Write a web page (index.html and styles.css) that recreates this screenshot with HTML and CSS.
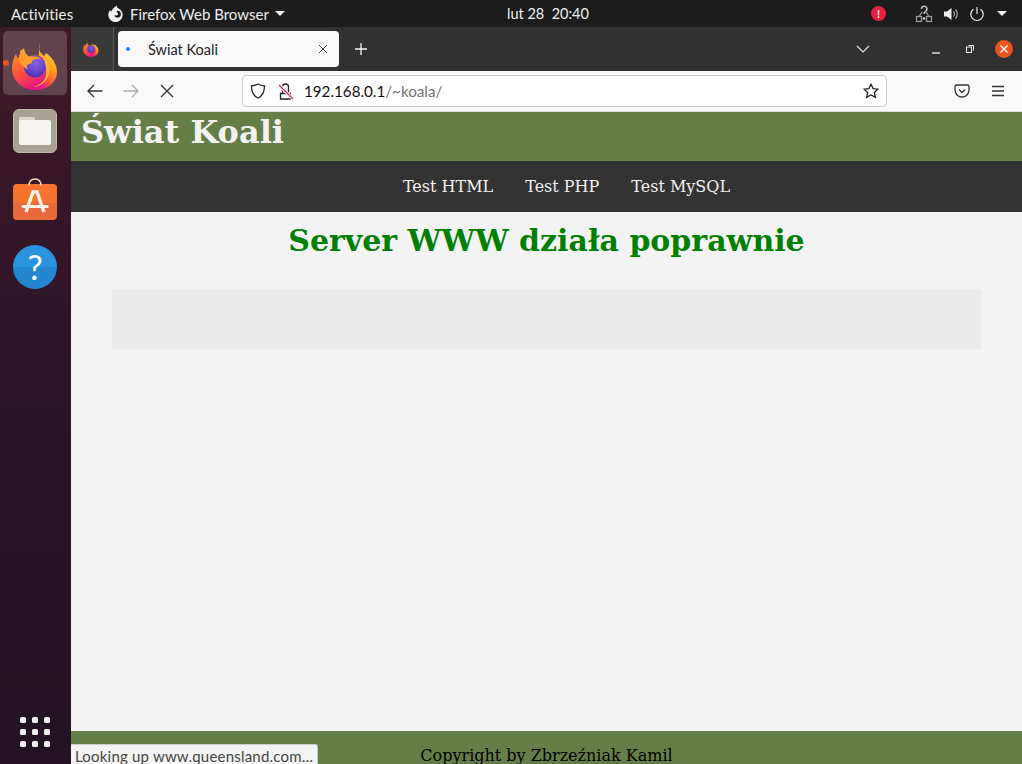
FILE: index.html
```html
<!DOCTYPE html>
<html lang="pl">
<head>
<meta charset="utf-8">
<title>Świat Koali</title>
<link rel="stylesheet" href="styles.css">
</head>
<body>
<div class="desktop">
  <div class="topbar">
    <div class="top-left">
      <span class="activities">Activities</span>
      <span class="app-menu">
        <svg class="app-icon" width="18" height="18" viewBox="0 0 18 18"><path d="M9 .5c-.3 1.300.2 2.200 1.200 2.700a7.200 7.200 0 1 1-7.800 1.500c0 1 .2 1.600.7 2C3.700 4.800 5.800 2.600 9 .5z" fill="#f0f0f0"/><path d="M9.500 5.800a3.400 3.400 0 1 1-3.300 4.300c1.200.7 3.300.6 3.800-.6.300-.9-.3-2-1.500-2.400.3-.7.500-1 1-1.300z" fill="#1c1c1c"/></svg>
        <span>Firefox Web Browser</span>
        <span class="caret"></span>
      </span>
    </div>
    <div class="clock">lut 28&nbsp; 20:40</div>
    <div class="top-right">
      <span class="alert">!</span>
      <svg class="net" width="18" height="18" viewBox="0 0 18 18" fill="none" stroke="#9a9a9a" stroke-width="1.300"><rect x="1.500" y="11.500" width="5" height="5"/><rect x="11.500" y="11.500" width="5" height="5"/><path d="M4 11.500 7 7M14 11.500 11 7"/><path d="M6.500 4a2.700 2.700 0 1 1 4 2.300C9.400 7 9 7.500 9 9" stroke="#bbb" stroke-width="1.600"/><circle cx="9" cy="13.500" r="1.200" fill="#ddd" stroke="none"/></svg>
      <svg class="vol" width="16" height="16" viewBox="0 0 16 16"><path d="M1 5.500h3L8.500 2v12L4 10.500H1z" fill="#eee"/><path d="M10.500 5.500a3.500 3.500 0 0 1 0 5M12.500 3.500a6.500 6.500 0 0 1 0 9" fill="none" stroke="#aaa" stroke-width="1.200"/></svg>
      <svg class="pow" width="16" height="16" viewBox="0 0 16 16" fill="none" stroke="#eee" stroke-width="1.200"><path d="M8 1v7"/><path d="M4.500 3.200a6.200 6.200 0 1 0 7 0"/></svg>
      <span class="caret"></span>
    </div>
  </div>

  <nav class="dock">
    <div class="dock-item dock-active">
      <span class="run-dot"></span>
      <svg class="ff-logo" width="46" height="47" viewBox="0 0 46 47">
        <defs>
          <linearGradient id="ffa" x1="0.750" y1="0" x2="0.400" y2="1"><stop offset="0" stop-color="#ffe54a"/><stop offset="0.450" stop-color="#ffa41f"/><stop offset="0.750" stop-color="#ff5a36"/><stop offset="1" stop-color="#e8178a"/></linearGradient>
          <linearGradient id="ffc" x1="0" y1="0" x2="0.500" y2="1"><stop offset="0" stop-color="#ff9a22"/><stop offset="0.600" stop-color="#ff4f3c"/><stop offset="1" stop-color="#e31587"/></linearGradient>
          <radialGradient id="ffb" cx="0.550" cy="0.350" r="0.700"><stop offset="0" stop-color="#8a62e8"/><stop offset="1" stop-color="#4a2db0"/></radialGradient>
        </defs>
        <path d="M28 0c-2 6 0 10 4 13l2-3c7 5 11 12 11 19 0 10-9 18-22 18z" fill="url(#ffa)"/>
        <path d="M23 47C10 47 0 37 0 25c0-5 1.500-10 4-14 .5 2 1 3 2.500 4.500C7 11.500 9 8 12 5.500c.5 3.500 2 6 5 8 4-1.500 9-1.500 13 1 6 4 9 11 6 18-3 8-8 14.500-13 14.500z" fill="url(#ffc)"/>
        <circle cx="23" cy="23.500" r="11" fill="url(#ffb)"/>
        <path d="M12 5.500c.5 3.500 2 6 5 8 5-1 10 0 13 3-4-1-8-.5-10 1.500 1 1-1 3-4 3.500-1.500 1-1.500 3 0 5-5-2-8-6-9-10-.5-2 .5-4 1.500-6-1-1.500-.5-3.500 3.500-5z" fill="#ff9c2e"/>
        <path d="M31 14c5 4 8 10 6 17-2 8-9 13-16 13 7-2 12-6 13-12 1-6-.5-12-3-18z" fill="#ffb52a"/>
      </svg>
    </div>
    <div class="dock-item">
      <div class="files"><div class="folder-tab"></div><div class="folder"></div></div>
    </div>
    <div class="dock-item">
      <div class="store">
        <svg class="handle" width="16" height="8" viewBox="0 0 16 8"><path d="M2 8C2 3 4 1 8 1s6 2 6 7" fill="none" stroke="#f7d9b8" stroke-width="1.500"/></svg>
        <svg class="store-a" width="28" height="24" viewBox="0 0 28 24" fill="none"><path d="M5 22 12 2h4l7 20" stroke="#fff3ea" stroke-width="3.400"/><path d="M2 16.500h24" stroke="#fff3ea" stroke-width="3.200" stroke-linecap="round"/></svg>
      </div>
    </div>
    <div class="dock-item">
      <div class="help">?</div>
    </div>
    <div class="dock-spacer"></div>
    <div class="grid-btn">
      <i></i><i></i><i></i><i></i><i></i><i></i><i></i><i></i><i></i>
    </div>
  </nav>

  <div class="browser">
    <div class="tabbar">
      <div class="pinned">
        <svg width="16" height="16" viewBox="0 0 46 47"><path d="M28 0c-2 6 0 10 4 13l2-3c7 5 11 12 11 19 0 10-9 18-22 18z" fill="url(#ffa)"/><path d="M23 47C10 47 0 37 0 25c0-5 1.500-10 4-14 .5 2 1 3 2.500 4.500C7 11.500 9 8 12 5.500c.5 3.500 2 6 5 8 4-1.500 9-1.500 13 1 6 4 9 11 6 18-3 8-8 14.500-13 14.500z" fill="url(#ffc)"/><circle cx="23" cy="23.500" r="11" fill="url(#ffb)"/></svg>
      </div>
      <div class="tab">
        <span class="tab-dot"></span>
        <span class="tab-title">Świat Koali</span>
        <svg width="10" height="10" viewBox="0 0 10 10" stroke="#444" stroke-width="1" fill="none"><path d="M1 1l8 8M9 1l-8 8"/></svg>
      </div>
      <svg class="newtab" width="12" height="12" viewBox="0 0 12 12" stroke="#f4f4f4" stroke-width="1.300"><path d="M6 0v12M0 6h12"/></svg>
      <div class="tab-fill"></div>
      <svg class="tablist" width="14" height="8" viewBox="0 0 14 8" fill="none" stroke="#e6e6e6" stroke-width="1.200"><path d="M1 1l6 6 6-6"/></svg>
      <div class="winctl">
        <svg class="w-min" width="10" height="10" viewBox="0 0 10 10" stroke="#eee" stroke-width="1.300"><path d="M1 9h8"/></svg>
        <svg class="w-res" width="10" height="10" viewBox="0 0 10 10" fill="none" stroke="#eee" stroke-width="1"><rect x="1.500" y="3" width="5" height="5.500"/><path d="M3.500 1.500h5v5"/></svg>
        <span class="win-close"><svg width="10" height="10" viewBox="0 0 10 10" stroke="#fff" stroke-width="1.400"><path d="M1.500 1.500l7 7M8.500 1.500l-7 7"/></svg></span>
      </div>
    </div>
    <div class="toolbar">
      <svg class="tb-back" width="16" height="14" viewBox="0 0 16 14" fill="none" stroke="#333" stroke-width="1.300"><path d="M15.500 7H1M7 1 1 7l6 6"/></svg>
      <svg class="tb-fwd" width="16" height="14" viewBox="0 0 16 14" fill="none" stroke="#aaa" stroke-width="1.300"><path d="M.5 7H15M9 1l6 6-6 6"/></svg>
      <svg class="tb-stop" width="14" height="14" viewBox="0 0 14 14" fill="none" stroke="#333" stroke-width="1.300"><path d="M1 1l12 12M13 1 1 13"/></svg>
      <div class="urlbar">
        <svg width="16" height="16" viewBox="0 0 16 16" fill="none" stroke="#222" stroke-width="1.300"><path d="M8 1c2 1.200 4 1.700 6.500 1.800C14.500 9 12.500 13 8 15 3.500 13 1.500 9 1.500 2.800 4 2.700 6 2.200 8 1z"/></svg>
        <svg class="lock" width="16" height="17" viewBox="0 0 16 17" fill="none"><path d="M1.500 10.500h10v5.500h-10zM3.500 10.500V4a3 3 0 0 1 6 0v6.500" stroke="#222" stroke-width="1.300"/><path d="M0 2l14 14" stroke="#fff" stroke-width="3.200"/><path d="M0 2l14 14" stroke="#e0245e" stroke-width="1.300"/></svg>
        <span class="url"><b>192.168.0.1</b><span class="url-path">/~koala/</span></span>
        <svg width="16" height="16" viewBox="0 0 16 16" fill="none" stroke="#222" stroke-width="1.300"><path d="M8 1.200l2.100 4.400 4.800.6-3.500 3.300.9 4.800L8 12l-4.300 2.300.9-4.800L1.100 6.200l4.800-.6z"/></svg>
      </div>
      <svg class="tb-pocket" width="16" height="16" viewBox="0 0 16 16" fill="none" stroke="#333" stroke-width="1.300"><path d="M2.500 2h11A1.500 1.500 0 0 1 15 3.500V7a7 7 0 0 1-14 0V3.500A1.500 1.500 0 0 1 2.500 2z"/><path d="M5 6.500l3 3 3-3"/></svg>
      <svg class="tb-menu" width="14" height="12" viewBox="0 0 14 12" stroke="#333" stroke-width="1.300"><path d="M1 1.500h12M1 6h12M1 10.500h12"/></svg>
    </div>
    <div class="page">
      <header class="site-head"><h1>Świat Koali</h1></header>
      <div class="site-nav">
        <a>Test HTML</a><a>Test PHP</a><a>Test MySQL</a>
      </div>
      <main class="site-main">
        <h2>Server WWW działa poprawnie</h2>
        <div class="panel"></div>
      </main>
      <footer class="site-foot">Copyright by Zbrzeźniak Kamil</footer>
      <div class="status">Looking up www.queensland.com…</div>
    </div>
  </div>
</div>
</body>
</html>
```
FILE: styles.css
```css
* { box-sizing: border-box; }
html, body { margin: 0; height: 100%; overflow: hidden; }
body { font-family: "Lato", "Noto Sans", sans-serif; }
.desktop {
  display: grid;
  grid-template-columns: 71px 1fr;
  grid-template-rows: 27px 1fr;
  width: 1022px;
  height: 764px;
}
.topbar {
  grid-column: 1 / 3;
  background: #1c1c1c;
  color: #eee;
  display: grid;
  grid-template-columns: 507px auto 1fr;
  align-items: center;
  font-size: 15px;
}
.top-left { display: flex; align-items: center; padding-left: 11px; }
.activities { width: 97px; letter-spacing: .15px; }
.app-menu { display: flex; align-items: center; gap: 4px; }
.app-icon { flex: none; margin-right: 0; }
.caret {
  display: inline-block;
  width: 0; height: 0;
  border-left: 5px solid transparent;
  border-right: 5px solid transparent;
  border-top: 5px solid #eee;
  margin-left: 2px;
}
.clock { font-size: 14.500px; }
.top-right { display: flex; align-items: center; justify-content: flex-end; padding-right: 15px; gap: 10px; }
.alert {
  width: 15px; height: 15px; border-radius: 50%;
  background: #e8213f; color: #fff;
  font-size: 11px; font-weight: 700; line-height: 15px; text-align: center;
  margin-right: 19px;
}
.dock {
  background: linear-gradient(180deg, #401b26 0%, #2f1428 40%, #231322 100%);
  display: flex;
  flex-direction: column;
  align-items: center;
  padding: 4px 0 17px;
  gap: 4px;
}
.dock-item {
  position: relative;
  flex: none;
  width: 64px; height: 64px;
  margin-left: -1px;
  border-radius: 5px;
  display: flex; align-items: center; justify-content: center;
}
.dock-active { background: rgba(255,255,255,.18); }
.run-dot {
  position: absolute; left: 0; top: 29px;
  width: 6px; height: 6px; border-radius: 50%;
  background: #e95420;
}
.ff-logo { margin-left: 0; margin-top: 6px; }
.files {
  position: relative;
  width: 44px; height: 44px; border-radius: 6px;
  background: #a8a294;
  border: 1px solid #bdb8aa;
}
.folder-tab { position: absolute; left: 5px; top: 7px; width: 16px; height: 8px; background: #d8d5cc; border-radius: 2px 2px 0 0; }
.folder { position: absolute; left: 5px; top: 10px; width: 32px; height: 25px; background: #f6f5f2; border-radius: 2px; }
.store {
  position: relative;
  width: 44px; height: 36px; margin-top: 6px; border-radius: 4px;
  background: linear-gradient(180deg, #f7732e 0%, #f4722f 52%, #e9683a 52%, #e96a3a 100%);
  display: flex; justify-content: center; align-items: center;
}
.handle { position: absolute; left: 14px; top: -6px; }
.help {
  width: 44px; height: 44px; border-radius: 50%;
  background: linear-gradient(180deg, #2a93de 50%, #2286d0 50%);
  color: #fff;
  font: 400 34px/44px "Lato", sans-serif;
  text-align: center;
}
.dock-spacer { flex: 1; }
.grid-btn {
  display: grid;
  grid-template-columns: repeat(3, 6px);
  gap: 6px;
  margin-left: -1px;
}
.grid-btn i { width: 6px; height: 6px; background: #eee; border-radius: 1.500px; }
.browser { display: flex; flex-direction: column; min-width: 0; min-height: 0; }
.tabbar {
  height: 44px; flex: none;
  background: #323132;
  display: flex; align-items: center;
}
.pinned {
  width: 43px; height: 44px;
  display: flex; align-items: center; justify-content: center;
  background: #3a393a;
  border-right: 1px solid #5a595a;
  padding-right: 2px;
}
.tab {
  width: 221px; height: 36px;
  margin-left: 4px;
  background: #f9f9fa;
  border-radius: 4px;
  display: flex; align-items: center;
  padding: 0 11px 0 8px;
  color: #222;
}
.tab-dot { width: 4px; height: 4px; border-radius: 50%; background: #0a84ff; margin-right: 18px; }
.tab-title { flex: 1; font-size: 14.500px; }
.newtab { margin-left: 16px; }
.tab-fill { flex: 1; }
.tablist { margin-right: 61px; }
.winctl { display: flex; align-items: center; gap: 24px; padding-right: 9px; }
.win-close {
  width: 18px; height: 18px; border-radius: 50%;
  background: #e95420;
  display: flex; align-items: center; justify-content: center;
  margin-left: -4px;
}
.toolbar {
  height: 41px; flex: none;
  background: #f9f9fa;
  border-bottom: 1px solid #ddd;
  display: flex; align-items: center;
  padding-left: 16px;
}
.tb-fwd { margin-left: 20px; }
.tb-stop { margin-left: 21px; }
.urlbar {
  width: 645px; height: 32px;
  margin-left: 68px;
  background: #fff;
  border: 1px solid #ccc;
  border-radius: 4px;
  display: flex; align-items: center;
  padding: 0 7px;
  gap: 12px;
}
.lock { margin-left: 1px; }
.url { flex: 1; font-size: 15.200px; margin-left: -3px; }
.url b { font-weight: 400; color: #111; }
.url-path { color: #70707a; }
.tb-pocket { margin-left: 67px; }
.tb-menu { margin-left: 21px; }
.page {
  position: relative;
  flex: 1; min-height: 0;
  background: #f3f3f3;
  display: flex; flex-direction: column;
  overflow: hidden;
  font-family: "DejaVu Serif", serif;
}
.site-head { height: 49px; flex: none; background: #657e47; padding: 0 10px; }
.site-head h1 { margin: 0; font-size: 32px; line-height: 40px; color: #f2f2f2; font-weight: 700; }
.site-nav {
  height: 51px; flex: none;
  background: #333;
  display: flex; justify-content: center; align-items: center;
  gap: 32px;
  color: #f2f2f2;
  font-size: 16px;
  padding-left: 40px;
}
.site-main { flex: none; height: 519px; padding: 0 41px; }
.site-main h2 { margin: 9px 0 29px; text-align: center; color: #008000; font-size: 30px; line-height: 39px; font-weight: 700; }
.panel { height: 60px; background: #ebebeb; }
.site-foot {
  flex: none; height: 60px;
  background: #657e47;
  color: #000;
  text-align: center;
  font-size: 16px;
  padding-top: 15px;
}
.status {
  position: absolute; left: 0; bottom: 0;
  height: 20px; width: 247px;
  background: #f4f4f4;
  border: 1px solid #ccc; border-left: 0; border-bottom: 0;
  border-top-right-radius: 3px;
  padding-left: 4px;
  font-family: "Lato", "Noto Sans", sans-serif;
  font-size: 15px; line-height: 22px; letter-spacing: .2px; color: #444;
  white-space: nowrap;
}
```
